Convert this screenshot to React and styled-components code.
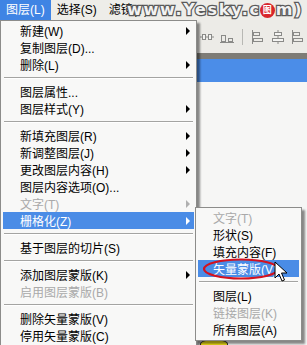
import styled, { createGlobalStyle } from "styled-components";

const Global = createGlobalStyle`
  html, body { margin: 0; padding: 0; background: #f5f5f3; }
  body { font-family: "Liberation Sans", "Noto Sans CJK SC", sans-serif; font-size: 12px; }
`;

const Screen = styled.div`
  position: relative;
  width: 307px;
  height: 345px;
  overflow: hidden;
  display: flex;
  flex-direction: column;
  background: #f5f5f3;
`;

const MenuBar = styled.div`
  display: flex;
  height: 20px;
  flex-shrink: 0;
  background: #eeede9;
`;

const BarItem = styled.div`
  padding: 0 6px;
  line-height: 20px;
  color: ${(p) => (p.$active ? "#fff" : "#000")};
  background: ${(p) => (p.$active ? "#3f84e4" : "transparent")};
`;

const Watermark = styled.div`
  position: absolute;
  left: 127px;
  top: 1px;
  display: flex;
  align-items: center;
  font-family: "DejaVu Sans", sans-serif;
  font-weight: bold;
  font-size: 16px;
  letter-spacing: 1.7px;
  color: #f2f2f2;
  -webkit-text-stroke: 2.5px #5a5a5a;
  paint-order: stroke fill;
  line-height: 18px;
`;

const Badge = styled.span`
  display: inline-flex;
  align-items: center;
  justify-content: center;
  width: 15px;
  height: 15px;
  border-radius: 50%;
  margin: 0 1px 0 -1px;
  background: #d8262c;
  color: #fff;
  -webkit-text-stroke: 0;
  font-family: "Noto Sans CJK SC", sans-serif;
  font-size: 9px;
  letter-spacing: 0;
`;

const Toolbar = styled.div`
  height: 33px;
  flex-shrink: 0;
  display: flex;
  align-items: center;
  gap: 6px;
  padding-left: 200px;
  background: #ecebe7;
`;

const ToolSep = styled.div`
  width: 1px;
  height: 16px;
  background: #b8b8b4;
  margin: 0 2px;
`;

const Stripe = styled.div`
  height: 6px;
  flex-shrink: 0;
  background: #7e7c76;
`;

const TitleBar = styled.div`
  height: 23px;
  flex-shrink: 0;
  background: #4b8de8;
`;

const Panel = styled.div`
  flex: 1;
  display: flex;
  align-items: flex-end;
  padding-left: 200px;
  background: #f6f6f5;
`;

const Blob = styled.div`
  width: 26px;
  height: 8px;
  margin-bottom: -4px;
  border-radius: 50% 50% 0 0;
  border: 1px solid #333;
  background: #f3e21a;
`;

const Menu = styled.div`
  position: absolute;
  left: ${(p) => p.$left}px;
  top: ${(p) => p.$top}px;
  width: ${(p) => p.$width}px;
  box-sizing: border-box;
  padding: 1px 2px 2px;
  background: #f8f8f7;
  border: 1px solid #8c8c8a;
  box-shadow: 3px 3px 2px rgba(0, 0, 0, 0.45);
`;

const Item = styled.div`
  height: 17px;
  display: flex;
  align-items: center;
  justify-content: space-between;
  padding: 0 4px 0 ${(p) => p.$indent}px;
  color: ${(p) => (p.$active ? "#fff" : p.$disabled ? "#a9a9a9" : "#000")};
  background: ${(p) => (p.$active ? "#4a8ce6" : "transparent")};
  white-space: nowrap;
`;

const Arrow = styled.span`
  width: 0;
  height: 0;
  border-top: 4px solid transparent;
  border-bottom: 4px solid transparent;
  border-left: 4px solid ${(p) => p.$color};
`;

const Sep = styled.div`
  margin: 4px 1px;
  border-top: 1px solid #a4a4a2;
  border-bottom: 1px solid #fff;
`;

const Overlay = styled.svg`
  position: absolute;
  left: ${(p) => p.$left}px;
  top: ${(p) => p.$top}px;
`;

const Icon = ({ kind }) => (
  <svg width="14" height="14" viewBox="0 0 14 14" fill="none" stroke="#8a8a88" strokeWidth="1">
    {kind === "h" && (
      <>
        <path d="M0 7h14" />
        <rect x="2.5" y="4.5" width="3" height="5" fill="#f4f4f2" />
        <rect x="8.5" y="4.5" width="3" height="5" fill="#f4f4f2" />
      </>
    )}
    {kind === "b" && (
      <>
        <path d="M0 12.5h14" />
        <rect x="1.5" y="5.5" width="4" height="6" />
        <rect x="8.5" y="8.5" width="4" height="3" />
      </>
    )}
    {kind === "l" && (
      <>
        <path d="M1.5 0v14" />
        <rect x="2.5" y="2.5" width="6" height="3" />
        <rect x="2.5" y="8.5" width="9" height="3" />
      </>
    )}
    {kind === "c" && (
      <>
        <path d="M7 0v14" />
        <rect x="3.5" y="2.5" width="7" height="3" fill="#f4f4f2" />
        <rect x="1.5" y="8.5" width="11" height="3" fill="#f4f4f2" />
      </>
    )}
  </svg>
);

const main = [
  { t: "新建(W)", a: 1 },
  { t: "复制图层(D)..." },
  { t: "删除(L)", a: 1 },
  "sep",
  { t: "图层属性..." },
  { t: "图层样式(Y)", a: 1 },
  "sep",
  { t: "新填充图层(R)", a: 1 },
  { t: "新调整图层(J)", a: 1 },
  { t: "更改图层内容(H)", a: 1 },
  { t: "图层内容选项(O)..." },
  { t: "文字(T)", a: 1, d: 1 },
  { t: "栅格化(Z)", a: 1, on: 1 },
  "sep",
  { t: "基于图层的切片(S)" },
  "sep",
  { t: "添加图层蒙版(K)", a: 1 },
  { t: "启用图层蒙版(B)", d: 1 },
  "sep",
  { t: "删除矢量蒙版(V)" },
  { t: "停用矢量蒙版(C)" },
];

const sub = [
  { t: "文字(T)", d: 1 },
  { t: "形状(S)" },
  { t: "填充内容(F)" },
  { t: "矢量蒙版(V)", on: 1 },
  "sep",
  { t: "图层(L)" },
  { t: "链接图层(K)", d: 1 },
  { t: "所有图层(A)" },
];

const renderItems = (list, indent) =>
  list.map((it, i) =>
    it === "sep" ? (
      <Sep key={i} />
    ) : (
      <Item key={i} $indent={indent} $active={it.on} $disabled={it.d}>
        <span>{it.t}</span>
        {it.a && <Arrow $color={it.on ? "#fff" : it.d ? "#b0b0b0" : "#000"} />}
      </Item>
    )
  );

export default function App() {
  return (
    <Screen>
      <Global />
      <MenuBar>
        <BarItem $active>图层(L)</BarItem>
        <BarItem>选择(S)</BarItem>
        <BarItem>滤镜(T)</BarItem>
      </MenuBar>
      <Watermark>
        www.Yesky.c<Badge>图</Badge>m)
      </Watermark>
      <Toolbar>
        <Icon kind="h" />
        <Icon kind="b" />
        <ToolSep />
        <Icon kind="l" />
        <Icon kind="c" />
        <Icon kind="l" />
      </Toolbar>
      <Stripe />
      <TitleBar />
      <Panel>
        <Blob />
      </Panel>

      <Menu $left={0} $top={20} $width={197}>
        {renderItems(main, 17)}
      </Menu>
      <Menu $left={195} $top={207} $width={107}>
        {renderItems(sub, 15)}
      </Menu>

      <Overlay $left={202} $top={257} width="80" height="24" viewBox="0 0 80 24">
        <ellipse cx="39" cy="12" rx="37" ry="9.5" fill="none" stroke="#d3121f" strokeWidth="2.2" />
      </Overlay>
      <Overlay $left={274} $top={261} width="14" height="22" viewBox="0 0 14 22">
        <path
          d="M1 1 L1 17 L5 13 L8 20 L10.5 19 L7.5 12 L13 12 Z"
          fill="#fff"
          stroke="#000"
          strokeWidth="1"
          strokeLinejoin="round"
        />
      </Overlay>
    </Screen>
  );
}
